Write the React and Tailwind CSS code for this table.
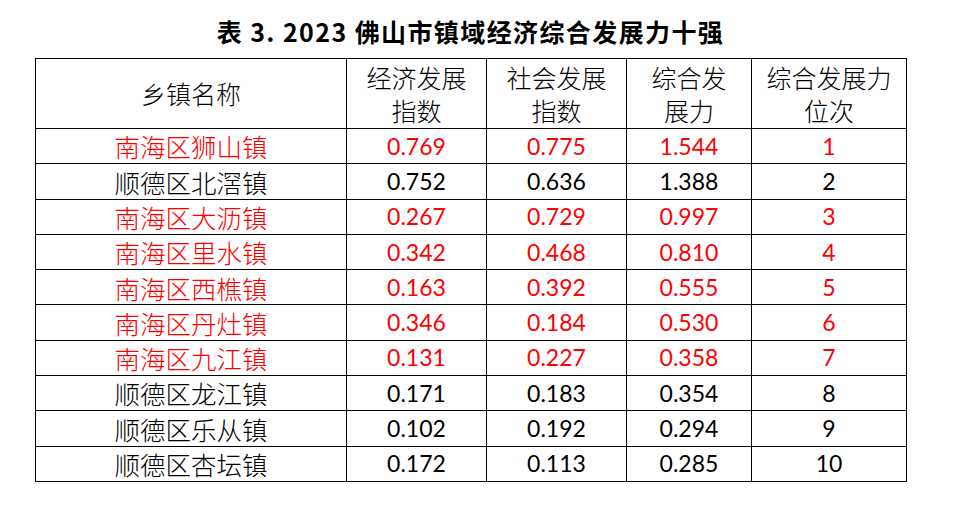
const rows = [
  ["南海区狮山镇", "0.769", "0.775", "1.544", "1", true],
  ["顺德区北滘镇", "0.752", "0.636", "1.388", "2", false],
  ["南海区大沥镇", "0.267", "0.729", "0.997", "3", true],
  ["南海区里水镇", "0.342", "0.468", "0.810", "4", true],
  ["南海区西樵镇", "0.163", "0.392", "0.555", "5", true],
  ["南海区丹灶镇", "0.346", "0.184", "0.530", "6", true],
  ["南海区九江镇", "0.131", "0.227", "0.358", "7", true],
  ["顺德区龙江镇", "0.171", "0.183", "0.354", "8", false],
  ["顺德区乐从镇", "0.102", "0.192", "0.294", "9", false],
  ["顺德区杏坛镇", "0.172", "0.113", "0.285", "10", false],
];

const cjk = "font-['Noto_Sans_CJK_SC',sans-serif]";
const num = "font-['Lato','Noto_Sans_CJK_SC',sans-serif]";

export default function App() {
  return (
    <div className="w-[963px] h-[513px] bg-white text-black overflow-hidden">
      <div className="w-[871px] ml-[35px]">
        <div
          className={`h-[58px] pt-[6px] flex items-center justify-center text-[25px] font-bold tracking-[1.4px] ${cjk}`}
        >
          表 3.&nbsp;2023 佛山市镇域经济综合发展力十强
        </div>
        <table className="w-[871px] table-fixed border-collapse">
          <colgroup>
            <col className="w-[311px]" />
            <col className="w-[140px]" />
            <col className="w-[140px]" />
            <col className="w-[125px]" />
            <col className="w-[155px]" />
          </colgroup>
          <thead>
            <tr className={`h-[70px] text-[25px] leading-[33px] ${cjk}`}>
              <th className="border border-black font-light">乡镇名称</th>
              <th className="border border-black font-light">经济发展<br />指数</th>
              <th className="border border-black font-light">社会发展<br />指数</th>
              <th className="border border-black font-light">综合发<br />展力</th>
              <th className="border border-black font-light">综合发展力<br />位次</th>
            </tr>
          </thead>
          <tbody>
            {rows.map(([name, a, b, c, rank, red]) => (
              <tr
                key={name}
                className={`h-[35.3px] text-center ${red ? "text-[#ff0000]" : "text-black"}`}
              >
                <td className={`border border-black p-0 text-[25.5px] leading-none font-light ${cjk}`}>
                  {name}
                </td>
                <td className={`border border-black p-0 text-[23px] leading-none ${num}`}>{a}</td>
                <td className={`border border-black p-0 text-[23px] leading-none ${num}`}>{b}</td>
                <td className={`border border-black p-0 text-[23px] leading-none ${num}`}>{c}</td>
                <td className={`border border-black p-0 text-[23px] leading-none ${num}`}>{rank}</td>
              </tr>
            ))}
          </tbody>
        </table>
      </div>
    </div>
  );
}
